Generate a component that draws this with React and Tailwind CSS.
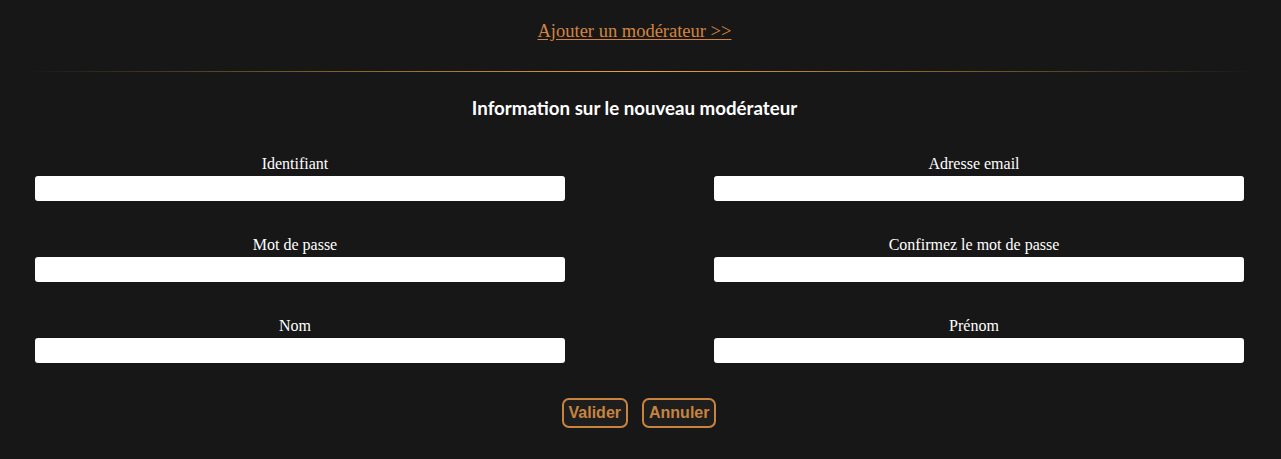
export default function App() {
  const serif = { fontFamily: '"Liberation Serif", "DejaVu Serif", serif' };
  const fields = [
    ["Identifiant", "Adresse email"],
    ["Mot de passe", "Confirmez le mot de passe"],
    ["Nom", "Prénom"],
  ];
  return (
    <div className="min-h-[459px] w-full bg-[#171717] text-white">
      <div className="flex justify-center pt-[19px] pr-[12px]">
        <a href="#" className="text-[18.5px] leading-[24px] text-[#d4843f] underline underline-offset-2" style={serif}>
          Ajouter un modérateur &gt;&gt;
        </a>
      </div>
      <div className="mx-[25px] mt-[28px] h-px bg-gradient-to-r from-transparent via-[#eaa63a] to-transparent" />
      <h2 className="mt-[24px] pr-[12px] text-center text-[18.7px] font-bold leading-[24px] text-white" style={{ fontFamily: 'Lato, "Open Sans", sans-serif' }}>
        Information sur le nouveau modérateur
      </h2>
      <div className="mt-[34px] grid grid-cols-[530px_530px] gap-x-[149px] gap-y-[34px] pl-[35px]">
        {fields.flat().map((label) => (
          <div key={label} className="flex flex-col">
            <label className="mb-[3px] pr-[10px] text-center text-[16px] leading-[19px] text-white" style={serif}>
              {label}
            </label>
            <input className="h-[25px] w-[530px] rounded-[3px] bg-white" />
          </div>
        ))}
      </div>
      <div className="mt-[35px] flex justify-center gap-[14px] pb-[31px] pr-[3px]">
        {["Valider", "Annuler"].map((b) => (
          <button
            key={b}
            className="h-[30px] rounded-[7px] border-2 border-[#c8843f] bg-[#1e1e1e] px-[5px] text-[16px] font-bold text-[#c8843f]"
            style={{ fontFamily: '"Liberation Sans", Arial, sans-serif' }}
          >
            {b}
          </button>
        ))}
      </div>
    </div>
  );
}
